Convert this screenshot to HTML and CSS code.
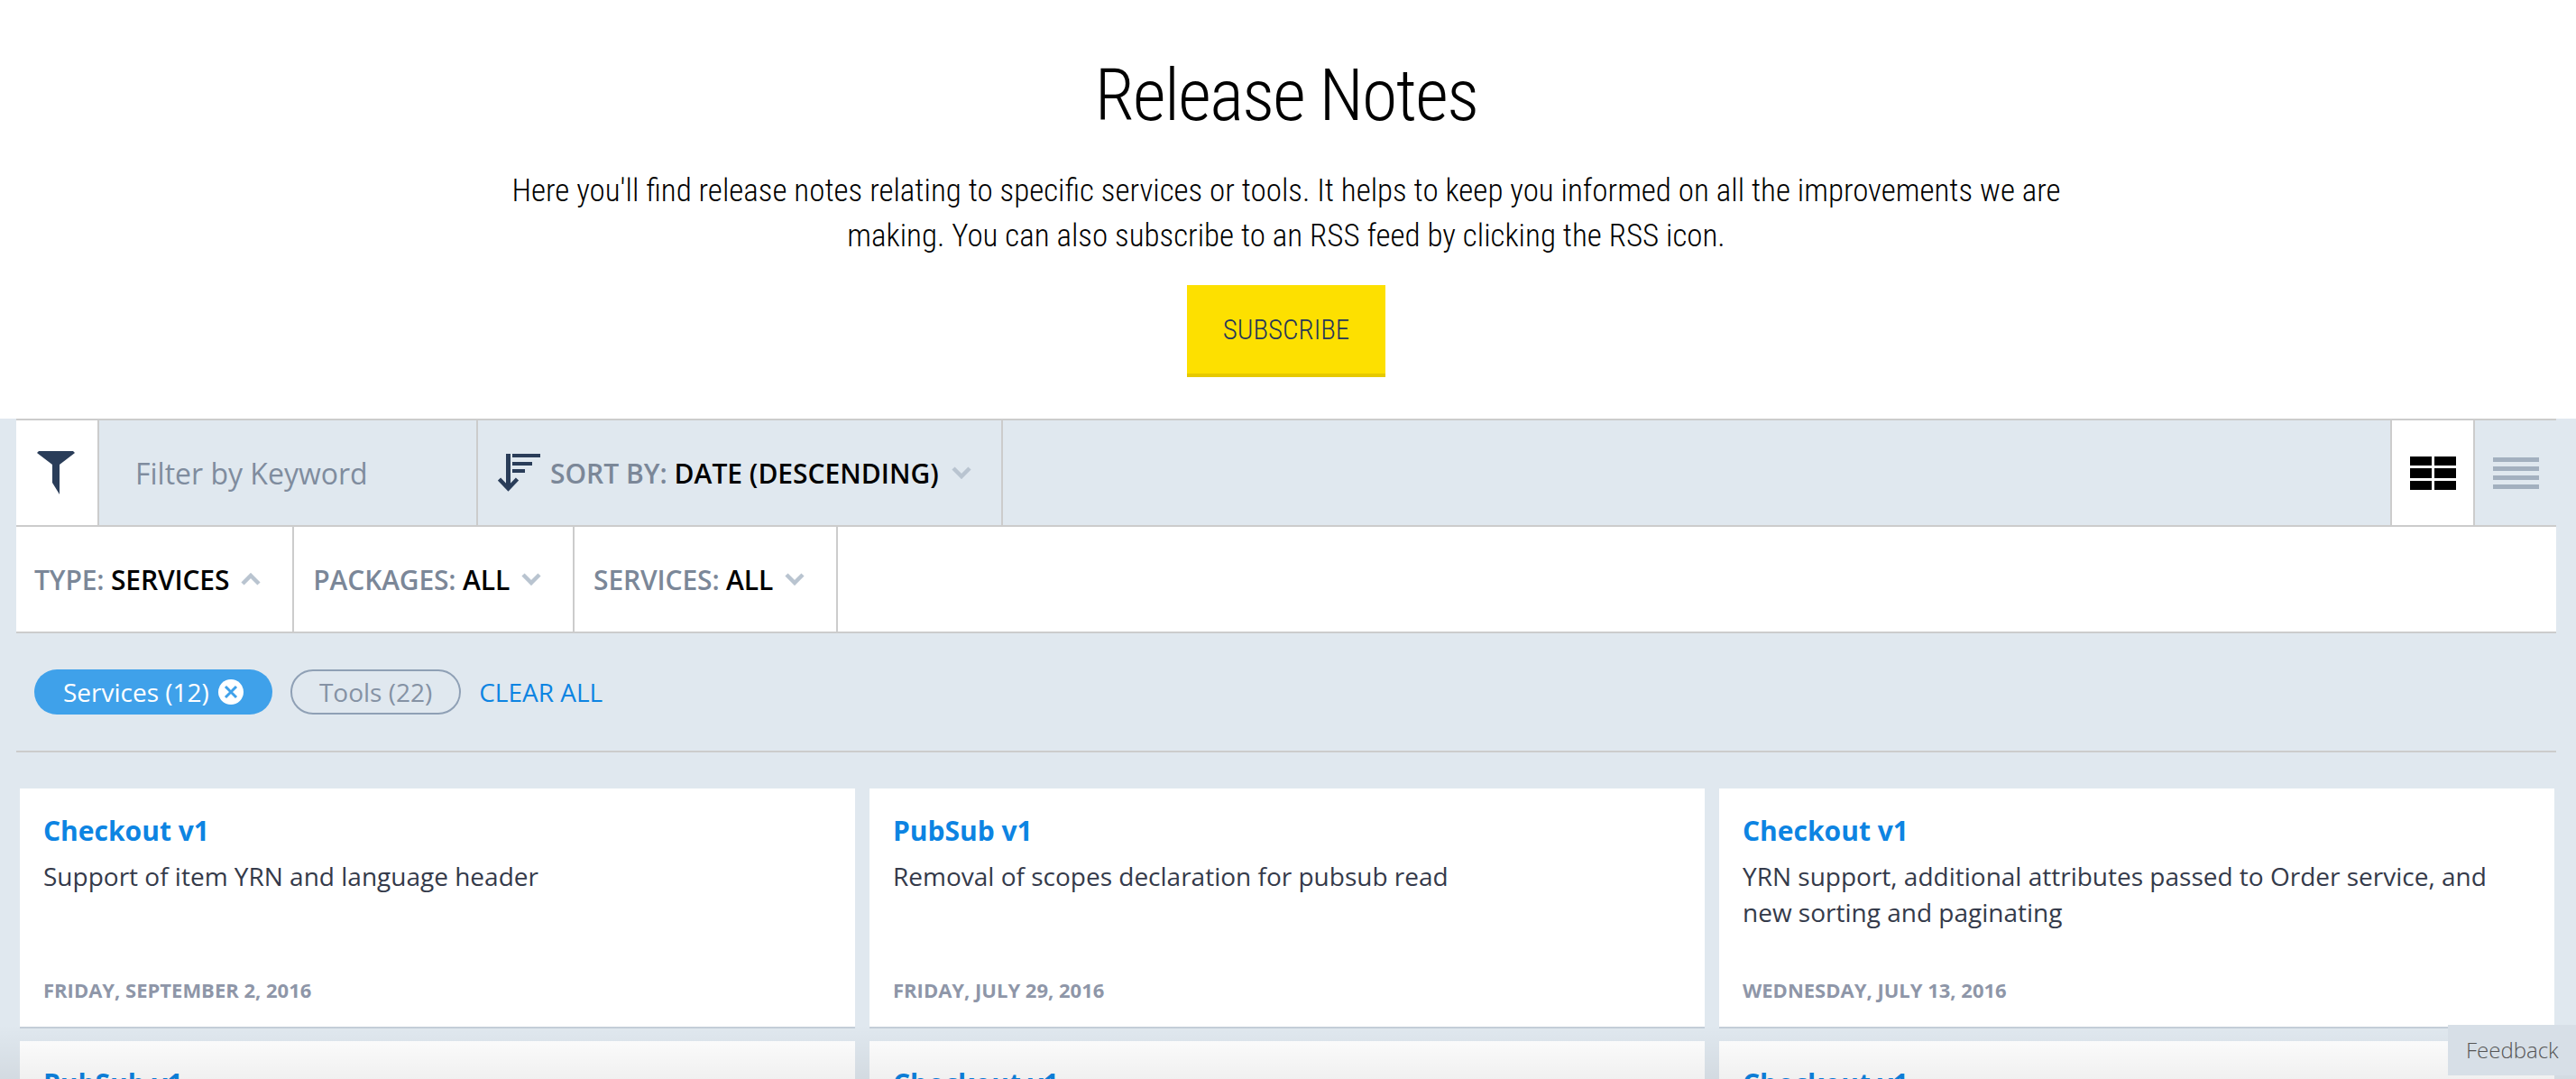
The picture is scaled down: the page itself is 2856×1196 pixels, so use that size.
FILE: index.html
```html
<!DOCTYPE html>
<html lang="en">
<head>
<meta charset="utf-8">
<title>Release Notes</title>
<link rel="stylesheet" href="styles.css">
</head>
<body>
<header class="intro">
  <h1 class="intro-title">Release Notes</h1>
  <p class="intro-text">Here you'll find release notes relating to specific services or tools. It helps to keep you informed on all the improvements we are making. You can also subscribe to an RSS feed by clicking the RSS icon.</p>
  <a class="subscribe" href="#">SUBSCRIBE</a>
</header>
<main class="content">
  <section class="toolbar">
    <div class="row row-search">
      <div class="icon-cell">
        <svg width="42" height="48" viewBox="0 0 42 48"><polygon class="ink" points="0,2 2,0 40,0 42,2 25,15 25,48 17,35 17,15"/></svg>
      </div>
      <div class="keyword"><input class="keyword-input" type="text" placeholder="Filter by Keyword"></div>
      <div class="sort">
        <svg width="48" height="42" viewBox="0 0 48 42"><g class="ink"><rect x="9" y="0" width="5" height="38"/><rect x="16" y="0" width="31" height="4"/><rect x="16" y="9" width="22" height="4"/><rect x="16" y="17" width="14" height="4"/></g><polyline class="arrow" points="1.5,28 11.5,38.5 21.5,28"/></svg>
        <span class="label">SORT BY: <b class="value">DATE (DESCENDING)</b></span>
        <svg class="chev" width="22" height="14" viewBox="0 0 22 14"><polyline points="2,2 11,11 20,2"/></svg>
      </div>
      <div class="view view-on">
        <svg width="51" height="37" viewBox="0 0 51 37"><rect x="0" y="0" width="24" height="10"/><rect x="27" y="0" width="24" height="10"/><rect x="0" y="13" width="24" height="11"/><rect x="27" y="13" width="24" height="11"/><rect x="0" y="27" width="24" height="10"/><rect x="27" y="27" width="24" height="10"/></svg>
      </div>
      <div class="view view-off">
        <svg width="51" height="35" viewBox="0 0 51 35"><rect x="0" y="0" width="51" height="5"/><rect x="0" y="10" width="51" height="5"/><rect x="0" y="20" width="51" height="5"/><rect x="0" y="30" width="51" height="5"/></svg>
      </div>
    </div>
    <div class="row row-filters">
      <div class="facet">
        <span class="label">TYPE: <b class="value">SERVICES</b></span>
        <svg class="chev" width="22" height="14" viewBox="0 0 22 14"><polyline points="2,12 11,3 20,12"/></svg>
      </div>
      <div class="facet">
        <span class="label">PACKAGES: <b class="value">ALL</b></span>
        <svg class="chev" width="22" height="14" viewBox="0 0 22 14"><polyline points="2,2 11,11 20,2"/></svg>
      </div>
      <div class="facet">
        <span class="label">SERVICES: <b class="value">ALL</b></span>
        <svg class="chev" width="22" height="14" viewBox="0 0 22 14"><polyline points="2,2 11,11 20,2"/></svg>
      </div>
    </div>
    <div class="chips">
      <span class="chip chip-on">Services (12)
        <svg width="28" height="28" viewBox="0 0 28 28"><circle cx="14" cy="14" r="14" fill="#fff"/><path d="M8 8l12 12M20 8l-12 12" stroke="#3fa1ea" stroke-width="3" fill="none"/></svg>
      </span>
      <span class="chip chip-off">Tools (22)</span>
      <a class="clear" href="#">CLEAR ALL</a>
    </div>
  </section>
  <section class="cards">
    <article class="card">
      <h2 class="card-title">Checkout v1</h2>
      <p class="card-text">Support of item YRN and language header</p>
      <div class="card-date">FRIDAY, SEPTEMBER 2, 2016</div>
    </article>
    <article class="card">
      <h2 class="card-title">PubSub v1</h2>
      <p class="card-text">Removal of scopes declaration for pubsub read</p>
      <div class="card-date">FRIDAY, JULY 29, 2016</div>
    </article>
    <article class="card">
      <h2 class="card-title">Checkout v1</h2>
      <p class="card-text">YRN support, additional attributes passed to Order service, and new sorting and paginating</p>
      <div class="card-date">WEDNESDAY, JULY 13, 2016</div>
    </article>
    <article class="card"><h2 class="card-title">PubSub v1</h2></article>
    <article class="card"><h2 class="card-title">Checkout v1</h2></article>
    <article class="card"><h2 class="card-title">Checkout v1</h2></article>
  </section>
</main>
<div class="fade"></div>
<a class="feedback" href="#">Feedback</a>
</body>
</html>
```
FILE: styles.css
```css
* { box-sizing: border-box; }
html, body { margin: 0; height: 1196px; overflow: hidden; }
body { background: #e0e8ef; font-family: "Open Sans", sans-serif; position: relative; }

.intro { background: #fff; height: 464px; padding: 66px 4px 0 0; display: flex; flex-direction: column; align-items: center; font-family: Roboto, sans-serif; font-stretch: 75%; font-weight: 300; color: #000; }
.intro-title { margin: 0; font-size: 80px; line-height: 80px; font-weight: 300; letter-spacing: -1.7px; }
.intro-text { margin: 41px 0 29px; width: 1760px; font-size: 35px; line-height: 50px; text-align: center; }
.subscribe { width: 220px; height: 102px; display: flex; align-items: center; justify-content: center; background: #fde000; border-bottom: 4px solid #e6c900; color: #26365a; font-size: 31px; text-decoration: none; }

.toolbar { margin: 0 22px 0 18px; border-bottom: 2px solid #ccc; }
.row { display: flex; height: 118px; border-bottom: 2px solid #ccc; }
.row-search { height: 120px; border-top: 2px solid #ccc; }
.row-filters { background: #fff; }
.ink { fill: #2a3d59; }
.arrow { fill: none; stroke: #2a3d59; stroke-width: 4.5; }
.chev { flex: none; }
.chev polyline { fill: none; stroke: #b9c4d0; stroke-width: 4.5; }

.icon-cell { width: 92px; background: #fff; border-right: 2px solid #ccc; display: flex; align-items: center; justify-content: center; padding-right: 2px; }
.keyword { width: 420px; border-right: 2px solid #ccc; padding-left: 40px; display: flex; align-items: center; }
.keyword-input { width: 100%; border: 0; padding: 0; background: transparent; font: 400 32px "Open Sans", sans-serif; outline: none; }
.keyword-input::placeholder { color: #7f8c9e; opacity: 1; }
.sort { width: 582px; border-right: 2px solid #ccc; padding-left: 22px; display: flex; align-items: center; }
.sort .label { margin: 0 14px 0 10px; }
.label { font-size: 30px; font-weight: 600; color: #7b8798; white-space: nowrap; }
.value { font-weight: 600; color: #000; }
.view { width: 94px; display: flex; align-items: center; justify-content: center; }
.view-on { margin-left: auto; background: #fff; border-left: 2px solid #ccc; border-right: 2px solid #ccc; }
.view-off { width: 90px; }
.view-on svg { fill: #000; }
.view-off svg { fill: #a3b0bf; }

.facet { display: flex; align-items: center; gap: 13px; padding: 0 35px 0 20px; border-right: 2px solid #ccc; }
.facet + .facet { padding-left: 21px; }
.facet .label { letter-spacing: -.15px; }

.chips { height: 130px; padding: 40px 0 0 20px; display: flex; align-items: flex-start; }
.chip { height: 50px; border-radius: 25px; display: flex; align-items: center; font-size: 28px; white-space: nowrap; }
.chip-on { background: #3fa1ea; color: #fff; padding: 0 32px; gap: 10px; }
.chip-off { margin-left: 20px; padding: 0 30px; border: 2px solid #8fa0b5; color: #8592a4; }
.clear { margin-left: 20px; line-height: 50px; font-size: 28px; color: #0d84e2; text-decoration: none; }

.cards { margin: 40px 24px 0 22px; display: grid; grid-template-columns: repeat(3, 926px); grid-auto-rows: 266px; gap: 14px 16px; }
.card { background: #fff; border-bottom: 2px solid #c4ced8; padding: 27px 26px 26px; display: flex; flex-direction: column; }
.card-title { margin: 0; font-size: 30px; line-height: 40px; font-weight: 700; color: #0d84e2; }
.card-text { margin: 10px 0 0; font-size: 28px; line-height: 40px; color: #343a4a; }
.card-date { margin-top: auto; font-size: 22px; line-height: 30px; font-weight: 700; color: #8e96a8; }

.fade { position: absolute; left: 0; right: 0; bottom: 0; height: 60px; background: linear-gradient(to bottom, rgba(0,0,0,0), rgba(0,0,0,.06)); pointer-events: none; }
.feedback { position: absolute; right: 0; top: 1136px; width: 142px; height: 56px; background: #d7dfe7; padding-left: 20px; font-size: 24px; font-weight: 300; line-height: 56px; color: #555; text-decoration: none; }
```
